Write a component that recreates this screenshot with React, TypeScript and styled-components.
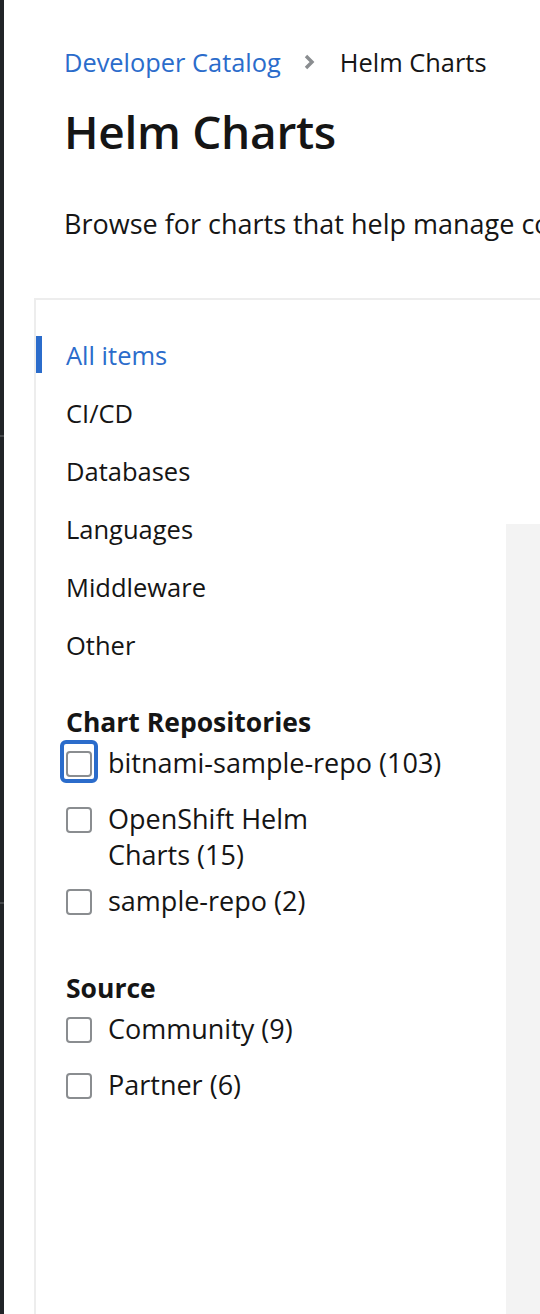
import React from "react";
import styled, { createGlobalStyle } from "styled-components";

const Global = createGlobalStyle`
  html, body { margin: 0; padding: 0; background: #fff; }
  body { font-family: "Open Sans", "Liberation Sans", sans-serif; color: #151515; }
  * { box-sizing: border-box; }
`;

const Shell = styled.div`
  display: flex;
  min-height: 1314px;
  overflow: hidden;
`;

const Strip = styled.div`
  width: 4px;
  flex: none;
  background: #212427;
  display: flex;
  flex-direction: column;
`;

const StripLine = styled.div<{ $top: number }>`
  height: 2px;
  margin-top: ${(p) => p.$top}px;
  background: #45484b;
`;

const Main = styled.main`
  flex: 1;
  display: flex;
  flex-direction: column;
  min-width: 0;
`;

const Header = styled.header`
  padding: 44px 0 0 60px;
  white-space: nowrap;
`;

const Breadcrumb = styled.nav`
  display: flex;
  align-items: center;
  font-size: 25.4px;
  line-height: 36px;
`;

const Crumb = styled.a`
  color: #2b6ccb;
  text-decoration: none;
`;

const Chevron = styled.svg`
  width: 12px;
  height: 16px;
  margin: 0 25px 0 22px;
`;

const Current = styled.span`
  color: #151515;
`;

const Title = styled.h1`
  margin: 23px 0 0;
  font-size: 46px;
  line-height: 56px;
  font-weight: 600;
  letter-spacing: -0.3px;
`;

const Description = styled.p`
  margin: 47px 0 0;
  font-size: 27px;
  line-height: 36px;
`;

const Panel = styled.section`
  margin: 56px 0 0 30px;
  border-top: 2px solid #ededed;
  border-left: 2px solid #ededed;
  display: flex;
  flex: 1;
`;

const Sidebar = styled.aside`
  width: 470px;
  flex: none;
  padding-top: 36px;
`;

const NavList = styled.ul`
  list-style: none;
  margin: 0;
  padding: 0;
  display: flex;
  flex-direction: column;
  gap: 21px;
`;

const NavItem = styled.li<{ $active?: boolean }>`
  height: 37px;
  display: flex;
  align-items: center;
  font-size: 25.5px;
  color: ${(p) => (p.$active ? "#2b6ccb" : "#151515")};
  border-left: 6px solid ${(p) => (p.$active ? "#2b6ccb" : "transparent")};
  padding-left: 24px;
`;

const FilterGroup = styled.div<{ $mt: number }>`
  margin-top: ${(p) => p.$mt}px;
  padding-left: 30px;
`;

const GroupTitle = styled.h2`
  margin: 0 0 8px;
  font-size: 26.5px;
  line-height: 30px;
  font-weight: 700;
`;

const Options = styled.div`
  display: flex;
  flex-direction: column;
  gap: 10px;
`;

const Option = styled.label`
  display: flex;
  align-items: flex-start;
  min-height: 46px;
  gap: 16px;
  font-size: 27px;
  line-height: 36px;
  cursor: pointer;
`;

const Box = styled.span<{ $focused?: boolean }>`
  position: relative;
  flex: none;
  width: 26px;
  height: 26px;
  margin-top: 6px;
  border: 2px solid #8a8d90;
  border-radius: 4px;
  background: #fff;
  &::before {
    content: "";
    display: ${(p) => (p.$focused ? "block" : "none")};
    position: absolute;
    top: -13px;
    bottom: -8px;
    left: -8px;
    right: -8px;
    border: 4px solid #2b6ccb;
    border-radius: 6px;
  }
`;

const LabelText = styled.span``;

const Content = styled.div`
  flex: 1;
  display: flex;
  flex-direction: column;
`;

const Toolbar = styled.div`
  height: 224px;
  flex: none;
`;

const Gallery = styled.div`
  flex: 1;
  background: #f3f3f3;
`;

const navItems = ["All items", "CI/CD", "Databases", "Languages", "Middleware", "Other"];

export default function App() {
  return (
    <>
      <Global />
      <Shell>
        <Strip>
          <StripLine $top={435} />
          <StripLine $top={465} />
        </Strip>
        <Main>
          <Header>
            <Breadcrumb>
              <Crumb href="#">Developer Catalog</Crumb>
              <Chevron viewBox="0 0 12 16">
                <path d="M3 2 L9 8 L3 14" fill="none" stroke="#8a8d90" strokeWidth="3.4" strokeLinejoin="miter" />
              </Chevron>
              <Current>Helm Charts</Current>
            </Breadcrumb>
            <Title>Helm Charts</Title>
            <Description>Browse for charts that help manage complex installations and upgrades.</Description>
          </Header>
          <Panel>
            <Sidebar>
              <NavList>
                {navItems.map((n, i) => (
                  <NavItem key={n} $active={i === 0}>{n}</NavItem>
                ))}
              </NavList>
              <FilterGroup $mt={44}>
                <GroupTitle>Chart Repositories</GroupTitle>
                <Options>
                  <Option>
                    <Box $focused />
                    <LabelText>bitnami-sample-repo (103)</LabelText>
                  </Option>
                  <Option>
                    <Box />
                    <LabelText>
                      OpenShift Helm
                      <br />
                      Charts (15)
                    </LabelText>
                  </Option>
                  <Option>
                    <Box />
                    <LabelText>sample-repo (2)</LabelText>
                  </Option>
                </Options>
              </FilterGroup>
              <FilterGroup $mt={44}>
                <GroupTitle>Source</GroupTitle>
                <Options>
                  <Option>
                    <Box />
                    <LabelText>Community (9)</LabelText>
                  </Option>
                  <Option>
                    <Box />
                    <LabelText>Partner (6)</LabelText>
                  </Option>
                </Options>
              </FilterGroup>
            </Sidebar>
            <Content>
              <Toolbar />
              <Gallery />
            </Content>
          </Panel>
        </Main>
      </Shell>
    </>
  );
}
